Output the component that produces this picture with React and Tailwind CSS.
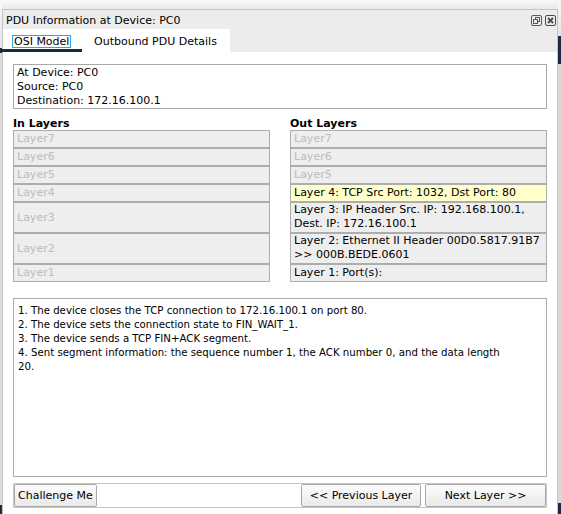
import React from "react";

const inLayers = [
  { label: "Layer7", h: "h-[18px]" },
  { label: "Layer6", h: "h-[18px]" },
  { label: "Layer5", h: "h-[18px]" },
  { label: "Layer4", h: "h-[18px]" },
  { label: "Layer3", h: "h-[31px]" },
  { label: "Layer2", h: "h-[31px]" },
  { label: "Layer1", h: "h-[18px]" },
];

const outLayers = [
  { lines: ["Layer7"], h: "h-[18px]", disabled: true },
  { lines: ["Layer6"], h: "h-[18px]", disabled: true },
  { lines: ["Layer5"], h: "h-[18px]", disabled: true },
  { lines: ["Layer 4: TCP Src Port: 1032, Dst Port: 80"], h: "h-[18px]", active: true },
  { lines: ["Layer 3: IP Header Src. IP: 192.168.100.1,", "Dest. IP: 172.16.100.1"], h: "h-[31px]" },
  { lines: ["Layer 2: Ethernet II Header 00D0.5817.91B7", ">> 000B.BEDE.0601"], h: "h-[31px]" },
  { lines: ["Layer 1: Port(s):"], h: "h-[18px]" },
];

const steps = [
  "1. The device closes the TCP connection to 172.16.100.1 on port 80.",
  "2. The device sets the connection state to FIN_WAIT_1.",
  "3. The device sends a TCP FIN+ACK segment.",
  "4. Sent segment information: the sequence number 1, the ACK number 0, and the data length 20.",
];

// small title bar glyphs
const RestoreIcon = () => (
  <svg width="11" height="11" viewBox="0 0 11 11" fill="none" stroke="#5a5a5a" strokeWidth="1">
    <rect x="0.5" y="0.5" width="10" height="10" rx="1.5" />
    <rect x="4.5" y="2.5" width="4" height="4" />
    <rect x="2.5" y="4.5" width="4" height="4" fill="#ececec" />
  </svg>
);

const CloseIcon = () => (
  <svg width="11" height="11" viewBox="0 0 11 11" fill="none" stroke="#4a4a4a">
    <rect x="0.5" y="0.5" width="10" height="10" rx="1.5" strokeWidth="1" />
    <path d="M3 3 L8 8 M8 3 L3 8" strokeWidth="1.8" />
  </svg>
);

const Button = ({ children, className = "" }) => (
  <button
    className={`h-[23px] border border-[#a9a9a9] rounded-[2px] bg-gradient-to-b from-[#fdfdfd] to-[#e9e9e9] text-[11px] leading-[13px] text-black ${className}`}
  >
    {children}
  </button>
);

const App = () => {
  return (
    <div className="flex w-[561px] h-[514px] overflow-hidden bg-[#eeeeee] font-['DejaVu_Sans',sans-serif] text-black">
      {/* desktop edge on the left */}
      <div className="flex flex-col w-[2px] shrink-0">
        <div className="h-[48px] bg-gradient-to-b from-[#f8f8f8] to-[#e6e6e6]" />
        <div className="h-[5px] bg-[#1b2946]" />
        <div className="flex-1 bg-[#dcdcdc]" />
        <div className="h-[9px] bg-[#1b2946]" />
      </div>

      {/* window */}
      <div className="flex flex-col w-[556px] shrink-0">
        <div className="h-[9px] bg-gradient-to-b from-[#fafafa] to-[#e8e8e8]" />
        <div className="flex-1 flex flex-col border-x border-t border-[#c4c4c4] bg-white">
          <div className="h-[19px] bg-[#ececec] flex items-center justify-between pl-[3px] pr-[1px]">
            <span className="text-[11px] leading-[13px] pt-[1px]">PDU Information at Device: PC0</span>
            <div className="flex items-center gap-[3px] pt-[1px]">
              <RestoreIcon />
              <CloseIcon />
            </div>
          </div>

          <div className="h-[23px] bg-[#ececec] flex">
            <div className="w-[227px] h-full bg-white flex">
              <div className="relative w-[79px] h-full">
                <span className="absolute left-[9px] top-[6px] border border-[#36a3d9] px-[1px] text-[11px] leading-[11px]">
                  OSI Model
                </span>
                <div className="absolute left-[-1px] right-0 bottom-0 h-[3px] bg-[#1b2946]" />
              </div>
              <div className="pl-[12px] pt-[6px] text-[11px] leading-[13px]">Outbound PDU Details</div>
            </div>
          </div>

          <div className="pl-[10px] flex flex-col">
            <div className="mt-[12px] w-[534px] h-[45px] border border-[#a9a9a9] pl-[3px] pt-[1px] text-[11px] leading-[14px]">
              <div>At Device: PC0</div>
              <div>Source: PC0</div>
              <div>Destination: 172.16.100.1</div>
            </div>

            <div className="mt-[8px] flex gap-[20px] w-[534px]">
              <div className="w-[257px] flex flex-col">
                <div className="text-[11px] leading-[13px] font-bold">In Layers</div>
                {inLayers.map((l) => (
                  <div
                    key={l.label}
                    className={`${l.h} border border-[#adadad] bg-[#eeeeee] flex items-center pl-[3px] text-[11px] leading-[14px] text-[#bcbcbc]`}
                  >
                    {l.label}
                  </div>
                ))}
              </div>
              <div className="w-[257px] flex flex-col">
                <div className="text-[11px] leading-[13px] font-bold">Out Layers</div>
                {outLayers.map((l) => (
                  <div
                    key={l.lines[0]}
                    className={`${l.h} border border-[#adadad] pl-[3px] text-[11px] ${
                      l.lines.length > 1 ? "leading-[14px]" : "leading-[16px]"
                    } ${l.active ? "bg-[#ffffcc]" : "bg-[#eeeeee]"} ${
                      l.disabled ? "text-[#bcbcbc]" : "text-black"
                    }`}
                  >
                    {l.lines.map((t) => (
                      <div key={t} className="whitespace-nowrap">{t}</div>
                    ))}
                  </div>
                ))}
              </div>
            </div>

            <div className="mt-[16px] w-[534px] h-[179px] border border-[#adadad] pl-[4px] pr-[40px] pt-[5px] text-[10.2px] leading-[14px]">
              {steps.map((s) => (
                <div key={s}>{s}</div>
              ))}
            </div>

            <div className="mt-[6px] w-[534px] h-[25px] border border-[#c4c4c4] flex items-center">
              <Button className="w-[83px] text-left pl-[3px]">Challenge Me</Button>
              <div className="flex-1" />
              <Button className="w-[120px]">&lt;&lt; Previous Layer</Button>
              <Button className="w-[121px] ml-[4px]">Next Layer &gt;&gt;</Button>
            </div>
          </div>
        </div>
      </div>

      {/* desktop edge on the right */}
      <div className="flex flex-col flex-1">
        <div className="h-[36px] bg-gradient-to-b from-[#f8f8f8] to-[#e6e6e6]" />
        <div className="h-[28px] bg-[#1b2946]" />
        <div className="flex-1 bg-[#d8d8d8]" />
        <div className="h-[11px] bg-[#1b2946]" />
      </div>
    </div>
  );
};

export default App;
